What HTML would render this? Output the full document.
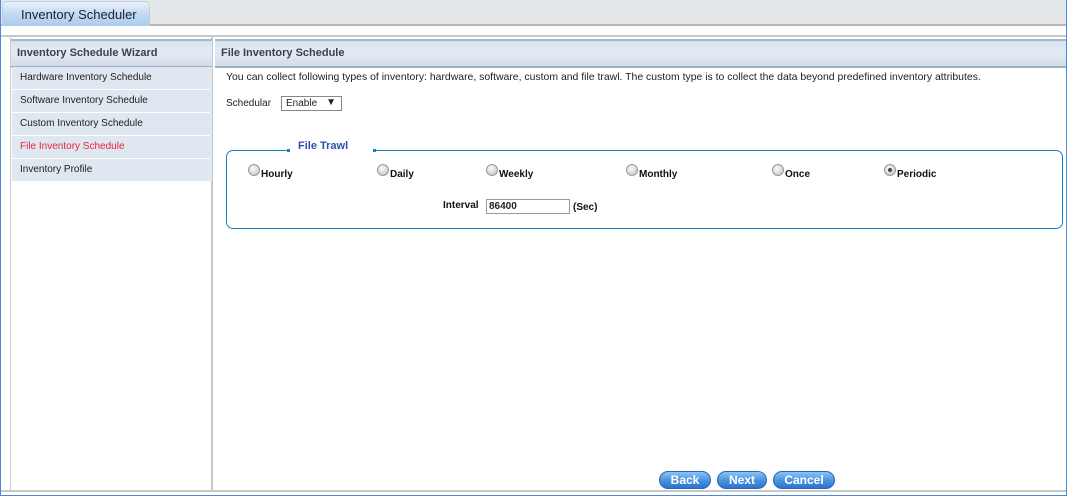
<!DOCTYPE html>
<html><head><style>
*{margin:0;padding:0;box-sizing:border-box}
body{width:1067px;height:496px;overflow:hidden;background:#fff;font-family:"Liberation Sans",Arial,sans-serif;font-size:10px;color:#222;position:relative}
.abs{position:absolute}
.outer{left:0;top:0;width:1067px;height:496px;border:1px solid #4a88d8;border-top:none}
.topbar{left:1px;top:0;width:1065px;height:26px;background:#e4e8eb;border-bottom:2px solid #b8b8b8}
.tab{left:2px;top:1px;width:148px;height:25px;background:linear-gradient(#e8f1fb,#c6dcf3 45%,#aacbee);border:1px solid #c4cdd6;border-bottom:none;border-radius:5px 5px 0 0;font-size:13px;color:#223;padding:5px 0 0 18px}
.line2{left:1px;top:35px;width:1065px;height:2px;background:#c8c8c8}
.lp{left:10px;top:37px;width:203px;height:454px;border-right:2px solid #c8c8c8;border-left:1px solid #ccc}
.rp{left:215px;top:37px;width:851px;height:454px}
.hdr{height:29px;background:linear-gradient(#d6e3f1,#e1eaf4 30%,#dfe8f3 60%,#d0dcea);border-top:2px solid #a6b8cc;border-bottom:2px solid #a3b0bf;font-weight:bold;font-size:11px;color:#3a4250;padding:6px 0 0 6px}
.item{position:absolute;left:1px;width:200px;height:22px;background:#dfe7f1;font-size:10px;color:#222;padding:5px 0 0 8px}
.bottom{left:1px;top:490px;width:1065px;height:2px;background:#c8c8c8}
.fs{left:226px;top:150px;width:837px;height:79px;border:1px solid #1a80c4;border-radius:7px}
.radio{position:absolute;width:12px;height:12px;border-radius:50%;background:radial-gradient(circle at 40% 35%,#fafafa,#d0d0d0 70%,#b0b0b0);border:1px solid #9a9a9a}
.lbl{position:absolute;font-weight:bold;font-size:10px;color:#111}
.btn{position:absolute;top:471px;height:18px;border-radius:9px;background:linear-gradient(#8ec3f0,#4b95e0 50%,#2b74cf);border:1px solid #2a66b5;color:#fff;font-weight:bold;font-size:12px;text-align:center;line-height:16px}
</style></head><body>
<div class="abs topbar"></div>
<div class="abs tab">Inventory Scheduler</div>
<div class="abs line2"></div>
<div class="abs lp">
 <div class="hdr" style="margin-top:2px;width:201px;font-size:11px">Inventory Schedule Wizard</div>
 <div class="item" style="top:30px">Hardware Inventory Schedule</div>
 <div class="item" style="top:53px">Software Inventory Schedule</div>
 <div class="item" style="top:76px">Custom Inventory Schedule</div>
 <div class="item" style="top:99px;color:#e8243c">File Inventory Schedule</div>
 <div class="item" style="top:122px">Inventory Profile</div>
</div>
<div class="abs rp">
 <div class="hdr" style="margin-top:2px">File Inventory Schedule</div>
</div>
<div class="abs" style="left:226px;top:72px;font-size:10.45px;color:#222;white-space:nowrap">You can collect following types of inventory: hardware, software, custom and file trawl. The custom type is to collect the data beyond predefined inventory attributes.</div>
<div class="abs" style="left:226px;top:98px">Schedular</div>
<div class="abs" style="left:281px;top:96px;width:61px;height:15px;border:1px solid #888;padding:1px 0 0 4px">Enable<span style="position:absolute;right:5px;top:0px;font-size:10px">▼</span></div>
<div class="abs fs"></div>
<div class="abs" style="left:287px;top:139px;width:88px;height:14px;background:#fff;color:#2b4fa8;font-weight:bold;font-size:11px;padding:1px 0 0 11px">File Trawl</div>
<div class="abs" style="left:287px;top:149px;width:3px;height:3px;background:#1a80c4"></div>
<div class="abs" style="left:373px;top:149px;width:3px;height:3px;background:#1a80c4"></div>
<div class="radio" style="left:248px;top:164px"></div><div class="lbl" style="left:261px;top:169px">Hourly</div>
<div class="radio" style="left:377px;top:164px"></div><div class="lbl" style="left:390px;top:169px">Daily</div>
<div class="radio" style="left:486px;top:164px"></div><div class="lbl" style="left:499px;top:169px">Weekly</div>
<div class="radio" style="left:626px;top:164px"></div><div class="lbl" style="left:639px;top:169px">Monthly</div>
<div class="radio" style="left:772px;top:164px"></div><div class="lbl" style="left:785px;top:169px">Once</div>
<div class="radio" style="left:884px;top:164px"><div style="position:absolute;left:3px;top:3px;width:4px;height:4px;border-radius:50%;background:#444"></div></div><div class="lbl" style="left:897px;top:169px">Periodic</div>
<div class="lbl" style="left:443px;top:200px">Interval</div>
<div class="abs" style="left:486px;top:199px;width:84px;height:15px;border:1px solid #999;padding:1px 0 0 2px;font-weight:bold;font-size:10px">86400</div>
<div class="lbl" style="left:573px;top:202px">(Sec)</div>
<div class="btn" style="left:659px;width:52px">Back</div>
<div class="btn" style="left:717px;width:50px">Next</div>
<div class="btn" style="left:773px;width:62px">Cancel</div>
<div class="abs bottom"></div>
<div class="abs outer"></div>
</body></html>
